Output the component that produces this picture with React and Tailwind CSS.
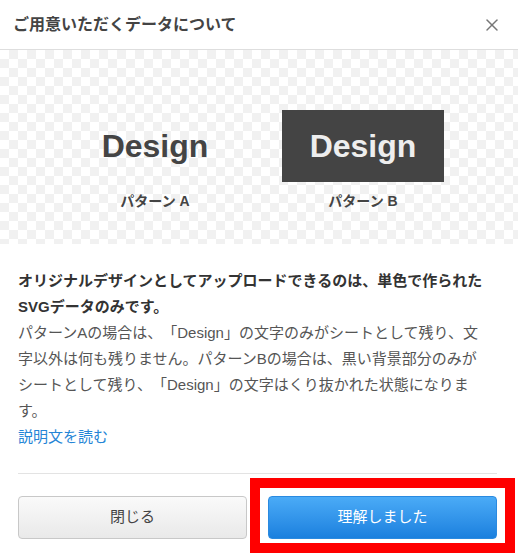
import { X } from "lucide-react";

const font = "font-['Liberation_Sans','Noto_Sans_CJK_JP',sans-serif]";

const Pattern = ({ dark, label }) => (
  <div className="w-[208px] flex flex-col items-center">
    {dark ? (
      <div className="w-[162px] h-[72px] bg-[#444] flex items-center justify-center">
        <span className="text-[32px] font-bold text-[#eee] leading-none">Design</span>
      </div>
    ) : (
      <div className="h-[72px] flex items-center justify-center">
        <span className="text-[32px] font-bold text-[#444] leading-none">Design</span>
      </div>
    )}
    <div className="mt-[9px] text-[14px] leading-[20px] font-bold text-[#444]">{label}</div>
  </div>
);

export default function App() {
  return (
    <div className={`w-[518px] h-[560px] bg-white relative overflow-hidden ${font}`}>
      <div className="h-[50px] flex items-center justify-between pl-[13px] pr-[16px] border-b border-[#dedede]">
        <h1 className="text-[16px] font-bold text-[#444]">ご用意いただくデータについて</h1>
        <X size={20} strokeWidth={1.8} className="text-[#777]" />
      </div>

      <div className="h-[194px] flex items-start justify-center pt-[60px] bg-[conic-gradient(#f1f1f1_25%,#fff_0_50%,#f1f1f1_0_75%,#fff_0)] bg-[length:18px_18px]">
        <Pattern label="パターン A" />
        <Pattern dark label="パターン B" />
      </div>

      <div className="pl-[18px] pr-[21px] pt-[24px] text-[15px] leading-[26px] whitespace-nowrap [text-spacing-trim:space-all]">
        <p className="font-bold text-[#333]">
          オリジナルデザインとしてアップロードできるのは、単色で作られた
          <br />
          SVGデータのみです。
        </p>
        <p className="text-[#555]">
          パターンAの場合は、「Design」の文字のみがシートとして残り、文
          <br />
          字以外は何も残りません。パターンBの場合は、黒い背景部分のみが
          <br />
          シートとして残り、「Design」の文字はくり抜かれた状態になりま
          <br />
          す。
        </p>
        <a className="text-[#2585d6] cursor-pointer">説明文を読む</a>
      </div>

      <div className="ml-[18px] mr-[21px] mt-[23px] border-t border-[#e3e3e3]" />

      <div className="pl-[18px] pr-[21px] pt-[22px] flex gap-[21px]">
        <button className="flex-1 h-[43px] rounded-[4px] border border-[#c8c8c8] bg-gradient-to-b from-[#fafafa] to-[#e9e9e9] text-[15px] text-[#444]">
          閉じる
        </button>
        <button className="flex-1 h-[43px] rounded-[4px] border border-[#2a8ae0] bg-gradient-to-b from-[#4aabf7] to-[#1a80de] text-[15px] text-white">
          理解しました
        </button>
      </div>

      <div className="absolute left-[250px] top-[478px] w-[265px] h-[75px] border-[10px] border-[#ff0000] pointer-events-none" />
    </div>
  );
}
